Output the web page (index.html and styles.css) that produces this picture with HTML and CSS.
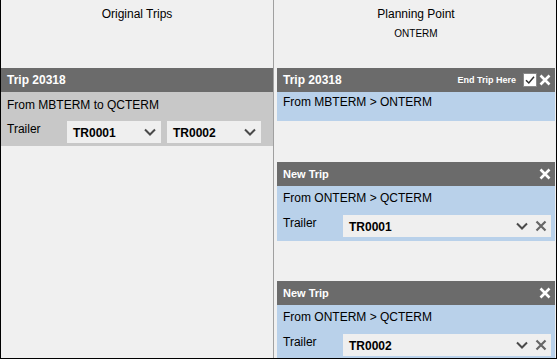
FILE: index.html
```html
<!DOCTYPE html>
<html lang="en">
<head>
    <meta charset="UTF-8">
    <meta name="viewport" content="width=device-width, initial-scale=1.0">
    <title>Trip Planning</title>
    <link rel="stylesheet" href="styles.css">
</head>
<body>
    <div class="board">
        <!-- Left: trips as they came in -->
        <div class="column column-left">
            <div class="column-head">
                <div class="column-title">Original Trips</div>
            </div>

            <div class="trip trip-original">
                <div class="trip-head">
                    <span class="trip-name">Trip 20318</span>
                </div>
                <div class="trip-body">
                    <div class="trip-route">From MBTERM to QCTERM</div>
                    <div class="trip-trailers">
                        <span class="trailer-label">Trailer</span>
                        <div class="select select-small">
                            <span class="select-value">TR0001</span>
                            <svg class="chevron" width="12" height="8" viewBox="0 0 12 8"><path d="M1 1.5L6 6.5L11 1.5" fill="none" stroke="#4a4a4a" stroke-width="2"/></svg>
                        </div>
                        <div class="select select-small">
                            <span class="select-value">TR0002</span>
                            <svg class="chevron" width="12" height="8" viewBox="0 0 12 8"><path d="M1 1.5L6 6.5L11 1.5" fill="none" stroke="#4a4a4a" stroke-width="2"/></svg>
                        </div>
                    </div>
                </div>
            </div>
        </div>

        <div class="divider"></div>

        <!-- Right: trips split at the planning point -->
        <div class="column column-right">
            <div class="column-head">
                <div class="column-title">Planning Point</div>
                <div class="column-sub">ONTERM</div>
            </div>

            <div class="trip trip-split">
                <div class="trip-head">
                    <span class="trip-name">Trip 20318</span>
                    <div class="trip-tools">
                        <span class="end-here">End Trip Here</span>
                        <svg class="checkbox" width="14" height="14" viewBox="0 0 14 14"><rect x="0.5" y="0.5" width="13" height="13" fill="#fff" stroke="#8a8a8a"/><path d="M3 7.2L5.8 10L11 3.8" fill="none" stroke="#333" stroke-width="1.5"/></svg>
                        <svg class="close" width="12" height="12" viewBox="0 0 12 12"><path d="M1.5 1.5L10.5 10.5M10.5 1.5L1.5 10.5" stroke="#fff" stroke-width="2.6"/></svg>
                    </div>
                </div>
                <div class="trip-body trip-body-short">
                    <div class="trip-route">From MBTERM &gt; ONTERM</div>
                </div>
            </div>

            <div class="trip trip-new">
                <div class="trip-head">
                    <span class="trip-name trip-name-small">New Trip</span>
                    <svg class="close" width="12" height="12" viewBox="0 0 12 12"><path d="M1.5 1.5L10.5 10.5M10.5 1.5L1.5 10.5" stroke="#fff" stroke-width="2.6"/></svg>
                </div>
                <div class="trip-body">
                    <div class="trip-route">From ONTERM &gt; QCTERM</div>
                    <div class="trip-trailers">
                        <span class="trailer-label">Trailer</span>
                        <div class="select select-wide">
                            <span class="select-value">TR0001</span>
                            <svg class="chevron" width="12" height="8" viewBox="0 0 12 8"><path d="M1 1.5L6 6.5L11 1.5" fill="none" stroke="#4a4a4a" stroke-width="2"/></svg>
                            <svg class="clear" width="12" height="12" viewBox="0 0 12 12"><path d="M1.5 1.5L10.5 10.5M10.5 1.5L1.5 10.5" stroke="#666" stroke-width="2.2"/></svg>
                        </div>
                    </div>
                </div>
            </div>

            <div class="trip trip-new">
                <div class="trip-head">
                    <span class="trip-name trip-name-small">New Trip</span>
                    <svg class="close" width="12" height="12" viewBox="0 0 12 12"><path d="M1.5 1.5L10.5 10.5M10.5 1.5L1.5 10.5" stroke="#fff" stroke-width="2.6"/></svg>
                </div>
                <div class="trip-body">
                    <div class="trip-route">From ONTERM &gt; QCTERM</div>
                    <div class="trip-trailers">
                        <span class="trailer-label">Trailer</span>
                        <div class="select select-wide">
                            <span class="select-value">TR0002</span>
                            <svg class="chevron" width="12" height="8" viewBox="0 0 12 8"><path d="M1 1.5L6 6.5L11 1.5" fill="none" stroke="#4a4a4a" stroke-width="2"/></svg>
                            <svg class="clear" width="12" height="12" viewBox="0 0 12 12"><path d="M1.5 1.5L10.5 10.5M10.5 1.5L1.5 10.5" stroke="#666" stroke-width="2.2"/></svg>
                        </div>
                    </div>
                </div>
            </div>
        </div>
    </div>
</body>
</html>
```

FILE: styles.css
```css
* {
    margin: 0;
    padding: 0;
    box-sizing: border-box;
}

body {
    font-family: 'Liberation Sans', Arial, sans-serif;
    font-size: 12px;
    color: #000;
    background: #f0f0f0;
}

.board {
    width: 557px;
    height: 359px;
    display: flex;
    background: #f0f0f0;
    border: 1px solid #000;
    border-top: none;
    overflow: hidden;
}

.column {
    display: flex;
    flex-direction: column;
}

.column-left {
    width: 272px;
    flex-shrink: 0;
}

.column-right {
    flex: 1;
    min-width: 0;
    padding: 0 1px 0 3px;
}

.divider {
    width: 1px;
    flex-shrink: 0;
    background: #a0a0a0;
}

.column-head {
    height: 68px;
    flex-shrink: 0;
    text-align: center;
    padding-top: 6px;
}

.column-title {
    font-size: 12px;
    line-height: 16px;
}

.column-sub {
    font-size: 10px;
    line-height: 14px;
    margin-top: 5px;
}

/* Trip panels */
.trip {
    flex-shrink: 0;
}

.trip + .trip {
    margin-top: 41px;
}

.trip-new + .trip-new {
    margin-top: 40px;
}

.trip-head {
    height: 24px;
    background: #6b6b6b;
    color: #fff;
    display: flex;
    align-items: center;
    justify-content: space-between;
    padding: 0 4px 0 6px;
}

.trip-name {
    font-weight: 700;
    font-size: 12px;
}

.trip-name-small {
    font-size: 11px;
}

.trip-tools {
    display: flex;
    align-items: center;
    gap: 2px;
}

.end-here {
    font-size: 9px;
    font-weight: 700;
    margin-right: 5px;
}

.trip-body {
    padding: 2px 3px 4px 6px;
    background: #b9d1ea;
}

.trip-original .trip-body {
    background: #c8c8c8;
    padding: 1px 6px 3px;
}

.trip-original .trip-route {
    line-height: 24px;
    margin-bottom: 4px;
}

.trip-body-short {
    padding: 0 6px 9px;
}

.trip-route {
    line-height: 20px;
    margin-bottom: 7px;
}

.trip-body-short .trip-route {
    margin-bottom: 0;
}

.trip-trailers {
    display: flex;
    align-items: flex-start;
    gap: 6px;
}

.trailer-label {
    width: 54px;
    line-height: 16px;
    font-size: 12px;
}

.select {
    height: 22px;
    background: #efefef;
    display: flex;
    align-items: center;
    padding: 0 3px 0 6px;
}

.select-small {
    width: 94px;
}

.select-wide {
    width: 208px;
    padding-right: 4px;
}

.select-value {
    flex: 1;
    font-weight: 700;
    font-size: 12px;
    padding-top: 1px;
}

.select-small .chevron {
    margin-right: 2px;
}

.select-wide .chevron {
    margin-right: 7px;
}
```
